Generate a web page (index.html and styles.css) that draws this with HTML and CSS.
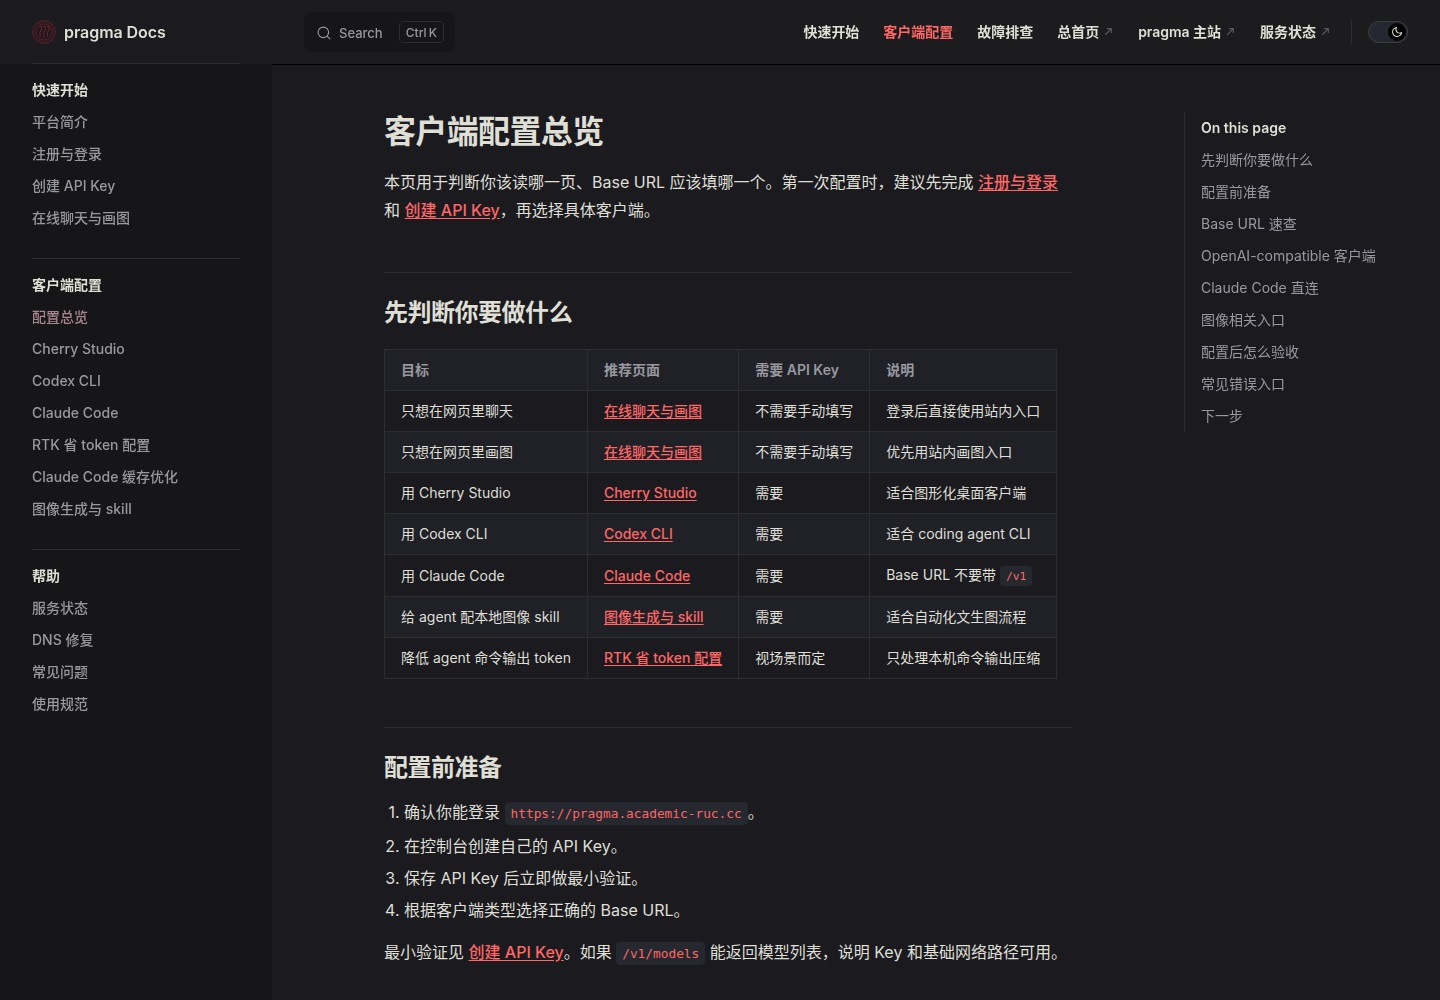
FILE: index.html
```html
<!DOCTYPE html>
<html lang="zh-CN">
<head>
    <meta charset="UTF-8">
    <meta name="viewport" content="width=device-width, initial-scale=1.0">
    <title>客户端配置总览 | pragma Docs</title>
    <link rel="stylesheet" href="styles.css">
</head>
<body>

    <div class="layout">
        <aside class="sidebar">
            <div class="sidebar-title">
                <a class="brand" href="#">
                    <svg class="logo" viewBox="0 0 24 24" fill="none" stroke="#7d1b2b">
                        <circle cx="12" cy="12" r="11.4" stroke-width="0.7"/>
                        <circle cx="12" cy="12" r="9.7" stroke-width="1.8" stroke-dasharray="1 1.2" opacity="0.5"/>
                        <circle cx="12" cy="12" r="8" stroke-width="0.7"/>
                        <path d="M7.5 6.5h2v3L8 12v5M11.3 6.5h2v3L11.8 12v6M15.1 6.5h2v3L15.6 12v4.5" stroke-width="1"/>
                    </svg>
                    <span>pragma Docs</span>
                </a>
            </div>
            <nav class="sidebar-nav">
                <div class="group">
                    <h2>快速开始</h2>
                    <a href="#">平台简介</a>
                    <a href="#">注册与登录</a>
                    <a href="#">创建 API Key</a>
                    <a href="#">在线聊天与画图</a>
                </div>
                <div class="group">
                    <h2>客户端配置</h2>
                    <a href="#" class="active">配置总览</a>
                    <a href="#">Cherry Studio</a>
                    <a href="#">Codex CLI</a>
                    <a href="#">Claude Code</a>
                    <a href="#">RTK 省 token 配置</a>
                    <a href="#">Claude Code 缓存优化</a>
                    <a href="#">图像生成与 skill</a>
                </div>
                <div class="group">
                    <h2>帮助</h2>
                    <a href="#">服务状态</a>
                    <a href="#">DNS 修复</a>
                    <a href="#">常见问题</a>
                    <a href="#">使用规范</a>
                </div>
            </nav>
        </aside>

        <div class="page">
            <header class="navbar">
                <button class="search" type="button">
                    <svg class="search-icon" viewBox="0 0 20 20" fill="none" stroke="currentColor" stroke-width="1.6" stroke-linecap="round" stroke-linejoin="round">
                        <path d="M14.386 14.386l4.0877 4.0877-4.0877-4.0877c-2.9418 2.9419-7.7115 2.9419-10.6533 0-2.9419-2.9418-2.9419-7.7115 0-10.6533 2.9418-2.9419 7.7115-2.9419 10.6533 0 2.9419 2.9418 2.9419 7.7115 0 10.6533z"/>
                    </svg>
                    <span class="search-text">Search</span>
                    <kbd>Ctrl K</kbd>
                </button>

                <nav class="menu">
                    <a href="#">快速开始</a>
                    <a href="#" class="active">客户端配置</a>
                    <a href="#">故障排查</a>
                    <a href="#">总首页<svg class="ext" viewBox="0 0 24 24"><path d="M9 5v2h6.59L4 18.59 5.41 20 17 8.41V15h2V5H9z"/></svg></a>
                    <a href="#">pragma 主站<svg class="ext" viewBox="0 0 24 24"><path d="M9 5v2h6.59L4 18.59 5.41 20 17 8.41V15h2V5H9z"/></svg></a>
                    <a href="#">服务状态<svg class="ext" viewBox="0 0 24 24"><path d="M9 5v2h6.59L4 18.59 5.41 20 17 8.41V15h2V5H9z"/></svg></a>
                </nav>

                <button class="switch" type="button" aria-label="Switch to light theme">
                    <span class="check">
                        <svg viewBox="0 0 24 24"><path d="M12.1 22c-.3 0-.6 0-.9 0-5.5-.5-9.5-5.4-9-10.9.4-4.8 4.2-8.6 9-9 .4 0 .8.2 1 .5.2.3.2.8-.1 1.1-2 2.7-1.4 6.4 1.3 8.4 2.1 1.6 5 1.6 7.1 0 .3-.2.7-.3 1.1-.1.3.2.5.5.5.9-.2 2.7-1.5 5.1-3.6 6.8-1.9 1.5-4.1 2.3-6.4 2.3zM9.3 4.4c-2.9 1-5 3.6-5.2 6.8-.4 4.4 2.8 8.3 7.2 8.7 2.1.2 4.2-.4 5.8-1.8 1.1-.9 1.9-2.1 2.4-3.4-2.5.9-5.3.5-7.5-1.1-2.8-2.2-3.9-5.9-2.7-9.2z"/></svg>
                    </span>
                </button>
            </header>

            <div class="content">
                <main class="doc">
                    <h1>客户端配置总览</h1>
                    <p>本页用于判断你该读哪一页、Base URL 应该填哪一个。第一次配置时，建议先完成 <a href="#">注册与登录</a> 和 <a href="#">创建 API Key</a>，再选择具体客户端。</p>

                    <h2>先判断你要做什么</h2>
                    <table>
                        <thead>
                            <tr><th>目标</th><th>推荐页面</th><th>需要 API Key</th><th>说明</th></tr>
                        </thead>
                        <tbody>
                            <tr><td>只想在网页里聊天</td><td><a href="#">在线聊天与画图</a></td><td>不需要手动填写</td><td>登录后直接使用站内入口</td></tr>
                            <tr><td>只想在网页里画图</td><td><a href="#">在线聊天与画图</a></td><td>不需要手动填写</td><td>优先用站内画图入口</td></tr>
                            <tr><td>用 Cherry Studio</td><td><a href="#">Cherry Studio</a></td><td>需要</td><td>适合图形化桌面客户端</td></tr>
                            <tr><td>用 Codex CLI</td><td><a href="#">Codex CLI</a></td><td>需要</td><td>适合 coding agent CLI</td></tr>
                            <tr><td>用 Claude Code</td><td><a href="#">Claude Code</a></td><td>需要</td><td>Base URL 不要带 <code>/v1</code></td></tr>
                            <tr><td>给 agent 配本地图像 skill</td><td><a href="#">图像生成与 skill</a></td><td>需要</td><td>适合自动化文生图流程</td></tr>
                            <tr><td>降低 agent 命令输出 token</td><td><a href="#">RTK 省 token 配置</a></td><td>视场景而定</td><td>只处理本机命令输出压缩</td></tr>
                        </tbody>
                    </table>

                    <h2>配置前准备</h2>
                    <ol>
                        <li>确认你能登录 <code>https://pragma.academic-ruc.cc</code>。</li>
                        <li>在控制台创建自己的 API Key。</li>
                        <li>保存 API Key 后立即做最小验证。</li>
                        <li>根据客户端类型选择正确的 Base URL。</li>
                    </ol>
                    <p>最小验证见 <a href="#">创建 API Key</a>。如果 <code>/v1/models</code> 能返回模型列表，说明 Key 和基础网络路径可用。</p>
                </main>

                <nav class="outline">
                    <div class="outline-title">On this page</div>
                    <a href="#">先判断你要做什么</a>
                    <a href="#">配置前准备</a>
                    <a href="#">Base URL 速查</a>
                    <a href="#">OpenAI-compatible 客户端</a>
                    <a href="#">Claude Code 直连</a>
                    <a href="#">图像相关入口</a>
                    <a href="#">配置后怎么验收</a>
                    <a href="#">常见错误入口</a>
                    <a href="#">下一步</a>
                </nav>
            </div>
        </div>
    </div>

</body>
</html>
```
FILE: styles.css
```css
:root {
    --bg: #1b1b1f;
    --bg-alt: #161618;
    --bg-soft: #202127;
    --divider: #2e2e32;
    --text-1: #dfdfd6;
    --text-2: #98989f;
    --text-3: #6a6a71;
    --brand: #ff6666;
}

* {
    box-sizing: border-box;
}

body {
    margin: 0;
    height: 100vh;
    overflow: hidden;
    background: var(--bg);
    color: var(--text-1);
    font-family: Inter, "Noto Sans CJK SC", sans-serif;
    font-size: 16px;
    line-height: 24px;
}

h1, h2, p, ol {
    margin: 0;
}

a {
    color: inherit;
    text-decoration: none;
}

button {
    border: 0;
    padding: 0;
    font-family: inherit;
    cursor: pointer;
}

.layout {
    display: grid;
    grid-template-columns: 272px 1fr;
    height: 100vh;
}

/* sidebar */
.sidebar {
    background: var(--bg-alt);
    will-change: transform;
}

.sidebar-title {
    height: 64px;
    padding: 0 32px;
    background: var(--bg);
}

.brand {
    display: flex;
    align-items: center;
    gap: 8px;
    height: 64px;
    border-bottom: 1px solid var(--divider);
    font-size: 16px;
    font-weight: 600;
    letter-spacing: -0.06px;
}

.logo {
    width: 24px;
    height: 24px;
}

.sidebar-nav {
    padding: 0 32px;
}

.group {
    padding: 10px 0 24px;
}

.group + .group {
    border-top: 1px solid var(--divider);
}

.group h2,
.group a {
    display: block;
    padding: 4px 0;
    font-size: 14px;
    line-height: 24px;
}

.group h2 {
    font-weight: 700;
}

.group a {
    color: var(--text-2);
    font-weight: 500;
}

.group a.active {
    color: #a8858d;
}

/* top bar */
.navbar {
    display: flex;
    align-items: center;
    height: 65px;
    padding: 0 32px 1px;
    background: #1c1c1e;
    border-bottom: 1px solid #000;
    will-change: transform;
}

.search {
    display: flex;
    align-items: center;
    height: 40px;
    width: 151px;
    padding: 0 11px 0 13px;
    border-radius: 8px;
    background: var(--bg-alt);
    color: var(--text-2);
}

.search-icon {
    width: 14px;
    height: 14px;
    margin-top: 2px;
}

.search-text {
    padding: 2px 0 0 8px;
    font-size: 13px;
    font-weight: 500;
}

.search kbd {
    margin-left: auto;
    height: 22px;
    padding: 0 6px;
    border: 1px solid var(--divider);
    border-radius: 4px;
    font-family: inherit;
    font-size: 12px;
    font-weight: 500;
    line-height: 21px;
    word-spacing: -1px;
}

.menu {
    display: flex;
    gap: 24px;
    margin-left: auto;
    font-size: 14px;
    font-weight: 600;
    letter-spacing: -0.02px;
}

.menu .active {
    color: var(--brand);
}

.ext {
    width: 11px;
    height: 11px;
    margin-left: 4px;
    fill: var(--text-3);
}

.switch {
    position: relative;
    width: 40px;
    height: 22px;
    margin-left: 37px;
    border: 1px solid #3c3f44;
    border-radius: 11px;
    background: #25282e;
}

/* line between the menu and the theme switch */
.switch::before {
    content: "";
    position: absolute;
    left: -18px;
    top: -2px;
    width: 1px;
    height: 24px;
    background: var(--divider);
}

.check {
    display: flex;
    align-items: center;
    justify-content: center;
    width: 18px;
    height: 18px;
    margin: 1px 1px 1px auto;
    border-radius: 50%;
    background: #000;
}

.check svg {
    width: 12px;
    height: 12px;
    fill: var(--text-1);
}

/* document */
.content {
    display: flex;
    align-items: flex-start;
    justify-content: space-between;
    padding: 47px 32px 0 112px;
}

.doc {
    width: 688px;
}

.doc h1 {
    font-size: 32px;
    font-weight: 600;
    line-height: 40px;
    letter-spacing: -0.02em;
}

.doc h2 {
    margin: 48px 0 16px;
    padding-top: 24px;
    border-top: 1px solid var(--divider);
    font-size: 24px;
    font-weight: 600;
    line-height: 32px;
    letter-spacing: -0.02em;
}

.doc p {
    margin: 16px 0;
    line-height: 28px;
}

.doc a {
    color: var(--brand);
    font-weight: 500;
    text-decoration: underline;
    text-underline-offset: 2px;
}

.doc code {
    padding: 4px 6px;
    border-radius: 4px;
    background: #25282e;
    color: var(--brand);
    font-family: "DejaVu Sans Mono", monospace;
    font-size: 0.8em;
}

.doc table {
    margin: 20px 0;
    border-collapse: collapse;
    font-size: 14px;
}

.doc th,
.doc td {
    padding: 8px 16px;
    border: 1px solid var(--divider);
    text-align: left;
}

.doc th {
    background: var(--bg-soft);
    color: var(--text-2);
    font-weight: 600;
}

.doc tbody tr:nth-child(2n) {
    background: var(--bg-soft);
}

.doc td code {
    padding-bottom: 3px;
    line-height: 22px;
}

.doc ol {
    margin: 16px 0;
    padding-left: 20px;
}

.doc li + li {
    margin-top: 8px;
}

.doc li::marker {
    font-variant-numeric: normal;
}

/* outline */
.outline {
    width: 224px;
    padding-left: 16px;
    border-left: 1px solid var(--divider);
    font-size: 14px;
    line-height: 32px;
    will-change: transform;
}

.outline-title {
    font-weight: 600;
}

.outline a {
    display: block;
    color: var(--text-2);
}
```
